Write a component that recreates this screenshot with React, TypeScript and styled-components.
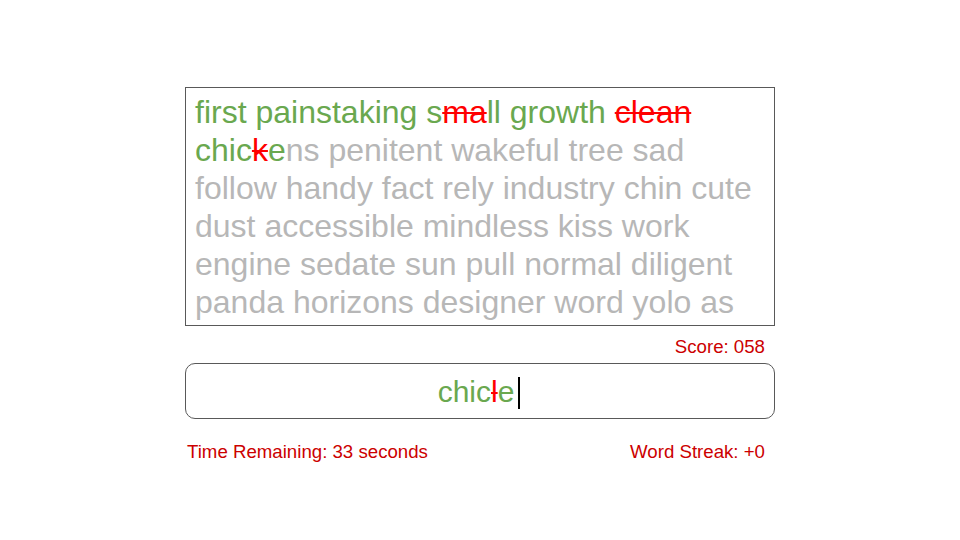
import React from "react";
import styled, { createGlobalStyle } from "styled-components";

const Global = createGlobalStyle`
  html, body { margin: 0; padding: 0; background: #fff; }
  body { font-family: "Liberation Sans", Arial, sans-serif; }
`;

const Page = styled.div`
  width: 960px;
  height: 540px;
  display: flex;
  flex-direction: column;
  align-items: center;
  padding-top: 87px;
  box-sizing: border-box;
`;

const Column = styled.div`
  width: 590px;
  display: flex;
  flex-direction: column;
`;

const TextBox = styled.div`
  height: 239px;
  box-sizing: border-box;
  border: 1px solid #595959;
  padding: 5px 9px 0;
  font-size: 32px;
  line-height: 38px;
  overflow: hidden;
  color: #b7b7b7;
`;

type Tone = "ok" | "bad" | "todo";

const Chunk = styled.span<{ $tone: Tone }>`
  color: ${({ $tone }) =>
    $tone === "ok" ? "#6aa84f" : $tone === "bad" ? "#ff0000" : "#b7b7b7"};
  text-decoration: ${({ $tone }) => ($tone === "bad" ? "line-through" : "none")};
  text-decoration-thickness: 2px;
`;

const Score = styled.div`
  align-self: flex-end;
  margin: 9px 10px 0 0;
  font-size: 18.67px;
  line-height: 24px;
  color: #cc0000;
`;

const InputBox = styled.div`
  margin-top: 4px;
  height: 56px;
  box-sizing: border-box;
  border: 1px solid #595959;
  border-radius: 10px;
  display: flex;
  align-items: center;
  justify-content: center;
  font-size: 30px;
  padding: 2px 2px 0 0;
`;

const Caret = styled.span`
  display: inline-block;
  width: 2px;
  height: 32px;
  background: #000;
  margin-left: 4px;
  vertical-align: -7px;
`;

const Footer = styled.div`
  display: flex;
  justify-content: space-between;
  margin: 21px 10px 0 2px;
  font-size: 18.67px;
  line-height: 24px;
  color: #cc0000;
`;

const typed: [string, Tone][] = [
  ["first painstaking s", "ok"],
  ["ma", "bad"],
  ["ll growth ", "ok"],
  ["clean", "bad"],
  [" chic", "ok"],
  ["k", "bad"],
  ["e", "ok"],
  [
    "ns penitent wakeful tree sad follow handy fact rely industry chin cute dust accessible mindless kiss work engine sedate sun pull normal diligent panda horizons designer word yolo as",
    "todo",
  ],
];

export default function App() {
  return (
    <Page>
      <Global />
      <Column>
        <TextBox>
          {typed.map(([t, tone], i) => (
            <Chunk key={i} $tone={tone}>
              {t}
            </Chunk>
          ))}
        </TextBox>
        <Score>Score: 058</Score>
        <InputBox>
          <span>
            <Chunk $tone="ok">chic</Chunk>
            <Chunk $tone="bad">l</Chunk>
            <Chunk $tone="ok">e</Chunk>
            <Caret />
          </span>
        </InputBox>
        <Footer>
          <span>Time Remaining: 33 seconds</span>
          <span>Word Streak: +0</span>
        </Footer>
      </Column>
    </Page>
  );
}
